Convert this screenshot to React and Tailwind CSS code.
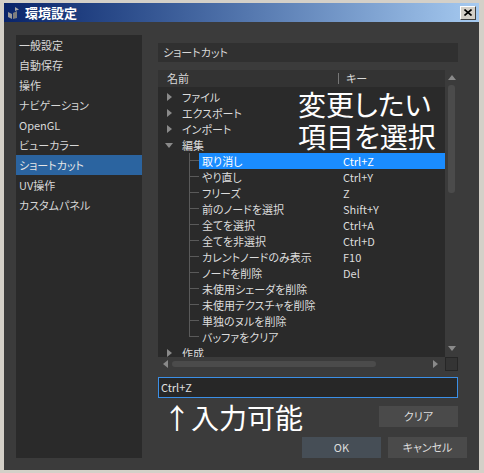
import { useState } from 'react'

const FONT = "font-['Noto_Sans_CJK_JP','Noto_Sans',sans-serif] [font-feature-settings:'palt']"

const MENU = ['一般設定', '自動保存', '操作', 'ナビゲーション', 'OpenGL', 'ビューカラー', 'ショートカット', 'UV操作', 'カスタムパネル']

const EDIT_ITEMS = [
  ['取り消し', 'Ctrl+Z'],
  ['やり直し', 'Ctrl+Y'],
  ['フリーズ', 'Z'],
  ['前のノードを選択', 'Shift+Y'],
  ['全てを選択', 'Ctrl+A'],
  ['全てを非選択', 'Ctrl+D'],
  ['カレントノードのみ表示', 'F10'],
  ['ノードを削除', 'Del'],
  ['未使用シェーダを削除', ''],
  ['未使用テクスチャを削除', ''],
  ['単独のヌルを削除', ''],
  ['バッファをクリア', ''],
]

function Tri({ dir = 'right', className = '' }) {
  const pts = {
    right: '0,0 5,4 0,8',
    left: '5,0 0,4 5,8',
    down: '0,0 8,0 4,5',
    up: '0,5 8,5 4,0',
  }[dir]
  const w = dir === 'right' || dir === 'left' ? 5 : 8
  const h = dir === 'right' || dir === 'left' ? 8 : 5
  return (
    <svg width={w} height={h} viewBox={`0 0 ${w} ${h}`} className={className}>
      <polygon points={pts} fill="#8a8a8a" />
    </svg>
  )
}

function GroupRow({ label, open }) {
  return (
    <div className="h-[16px] flex items-center pl-[7px] shrink-0">
      <div className="w-[8px] flex justify-center">
        {open ? <Tri dir="down" /> : <Tri dir="right" />}
      </div>
      <span className="ml-[9px] text-[#dcdcdc]">{label}</span>
    </div>
  )
}

function ChildRow({ name, keyName, last, selected, onClick }) {
  return (
    <div className="h-[16px] flex pl-[31px] shrink-0" onClick={onClick}>
      <div className="w-[10px] flex flex-col">
        <div className="h-[8px] border-l border-b border-[#5a5a5a]"></div>
        <div className={last ? 'h-[8px]' : 'h-[8px] border-l border-[#5a5a5a]'}></div>
      </div>
      <div className={`flex-1 flex items-center ${selected ? 'bg-[#1a8cff] text-white' : 'text-[#dcdcdc]'}`}>
        <span className="w-[144px] pl-[3px]">{name}</span>
        <span>{keyName}</span>
      </div>
    </div>
  )
}

function Button({ children, className = '' }) {
  return (
    <button className={`h-[21px] w-[79px] flex items-center justify-center text-[#dcdcdc] ${className}`}>
      {children}
    </button>
  )
}

export default function App() {
  const [sel, setSel] = useState(0)

  return (
    <div className={`w-[484px] h-[473px] bg-[#d4d0c8] pt-[3px] pl-[4px] pr-[5px] pb-[4px] flex flex-col text-[11px] ${FONT}`}>
      {/* title bar */}
      <div className="h-[19px] shrink-0 bg-gradient-to-r from-[#0a246a] to-[#a6caf0] flex items-center pl-[3px] pr-[3px]">
        <svg width="14" height="14" viewBox="0 0 14 14">
          <polygon points="1,6 5,8 5,13 1,11" fill="#9a9a9a" />
          <polygon points="6,7 10,5 10,12 6,13" fill="#7e7e7e" />
          <polygon points="8,1 12,3.5 8,5" fill="#a8a8a8" />
        </svg>
        <span className="ml-[4px] text-white font-bold text-[13px] leading-none">環境設定</span>
        <div className="ml-auto w-[16px] h-[14px] bg-[#d4d0c8] border border-t-white border-l-white border-r-[#404040] border-b-[#404040] flex items-center justify-center">
          <svg width="8" height="7" viewBox="0 0 8 7">
            <path d="M0.5 0.5 L7.5 6.5 M7.5 0.5 L0.5 6.5" stroke="#000" strokeWidth="1.6" />
          </svg>
        </div>
      </div>

      {/* body */}
      <div className="flex-1 bg-[#3b3b3b] flex pt-[13px] pb-[12px] px-[12px] gap-[16px]">
        {/* left menu */}
        <div className="w-[126px] bg-[#2a2a2a] flex flex-col">
          {MENU.map((m, i) => (
            <div key={m} className={`h-[20px] flex items-center pl-[3px] ${i === 6 ? 'bg-[#2b64a0] text-[#e6e6e6]' : 'text-[#d8d8d8]'}`}>
              {m}
            </div>
          ))}
        </div>

        {/* right */}
        <div className="flex-1 flex flex-col">
          <div className="mt-[8px] w-[300px] h-[19px] bg-[#303030] flex items-center pl-[5px] text-[#d8d8d8]">ショートカット</div>

          {/* tree */}
          <div className="mt-[8px] w-[300px] h-[301px] flex flex-col">
            <div className="flex h-[287px]">
              <div className="w-[287px] flex flex-col">
                <div className="h-[17px] bg-[#333333] flex items-center text-[#d8d8d8]">
                  <span className="w-[180px] pl-[9px]">名前</span>
                  <div className="w-px h-[11px] bg-[#777]"></div>
                  <span className="pl-[7px]">キー</span>
                </div>
                <div className="relative flex-1 bg-[#2a2a2a] overflow-hidden flex flex-col pt-[2px]">
                  <GroupRow label="ファイル" />
                  <GroupRow label="エクスポート" />
                  <GroupRow label="インポート" />
                  <GroupRow label="編集" open />
                  {EDIT_ITEMS.map(([n, k], i) => (
                    <ChildRow key={n} name={n} keyName={k} last={i === EDIT_ITEMS.length - 1} selected={sel === i} onClick={() => setSel(i)} />
                  ))}
                  <GroupRow label="作成" />
                  <div className="absolute left-[140px] top-[1px] text-white text-[28px] leading-[32px] pointer-events-none">
                    <div>変更したい</div>
                    <div>項目を選択</div>
                  </div>
                </div>
              </div>
              {/* vertical scrollbar */}
              <div className="w-[13px] flex flex-col items-center pt-[5px] pb-[6px]">
                <Tri dir="up" />
                <div className="mt-[5px] w-[7px] h-[108px] rounded-[3px] bg-[#4b4b4b]"></div>
                <div className="flex-1"></div>
                <Tri dir="down" />
              </div>
            </div>
            {/* horizontal scrollbar */}
            <div className="flex h-[14px]">
              <div className="w-[287px] flex items-center pl-[5px] pr-[7px]">
                <Tri dir="left" />
                <div className="ml-[4px] w-[204px] h-[6px] rounded-[3px] bg-[#4b4b4b]"></div>
                <div className="flex-1"></div>
                <Tri dir="right" />
              </div>
              <div className="w-[13px] border border-[#262626] bg-[#343434]"></div>
            </div>
          </div>

          {/* input */}
          <div className="mt-[6px] w-[300px] h-[21px] border border-[#3b8fe6] bg-[#272727] flex items-center pl-[2px] text-[#e0e0e0]">
            Ctrl+Z
          </div>

          <div className="mt-[8px] w-[300px] h-[21px] flex items-center justify-between">
            <span className="pl-[5px] text-white text-[28px] leading-none">↑入力可能</span>
            <Button className="bg-[#4a4a4a]">クリア</Button>
          </div>

          <div className="mt-[10px] h-[21px] flex justify-end gap-[7px]">
            <Button className="bg-[#464e56]">OK</Button>
            <Button className="bg-[#4a4a4a]">キャンセル</Button>
          </div>
        </div>
      </div>
    </div>
  )
}
